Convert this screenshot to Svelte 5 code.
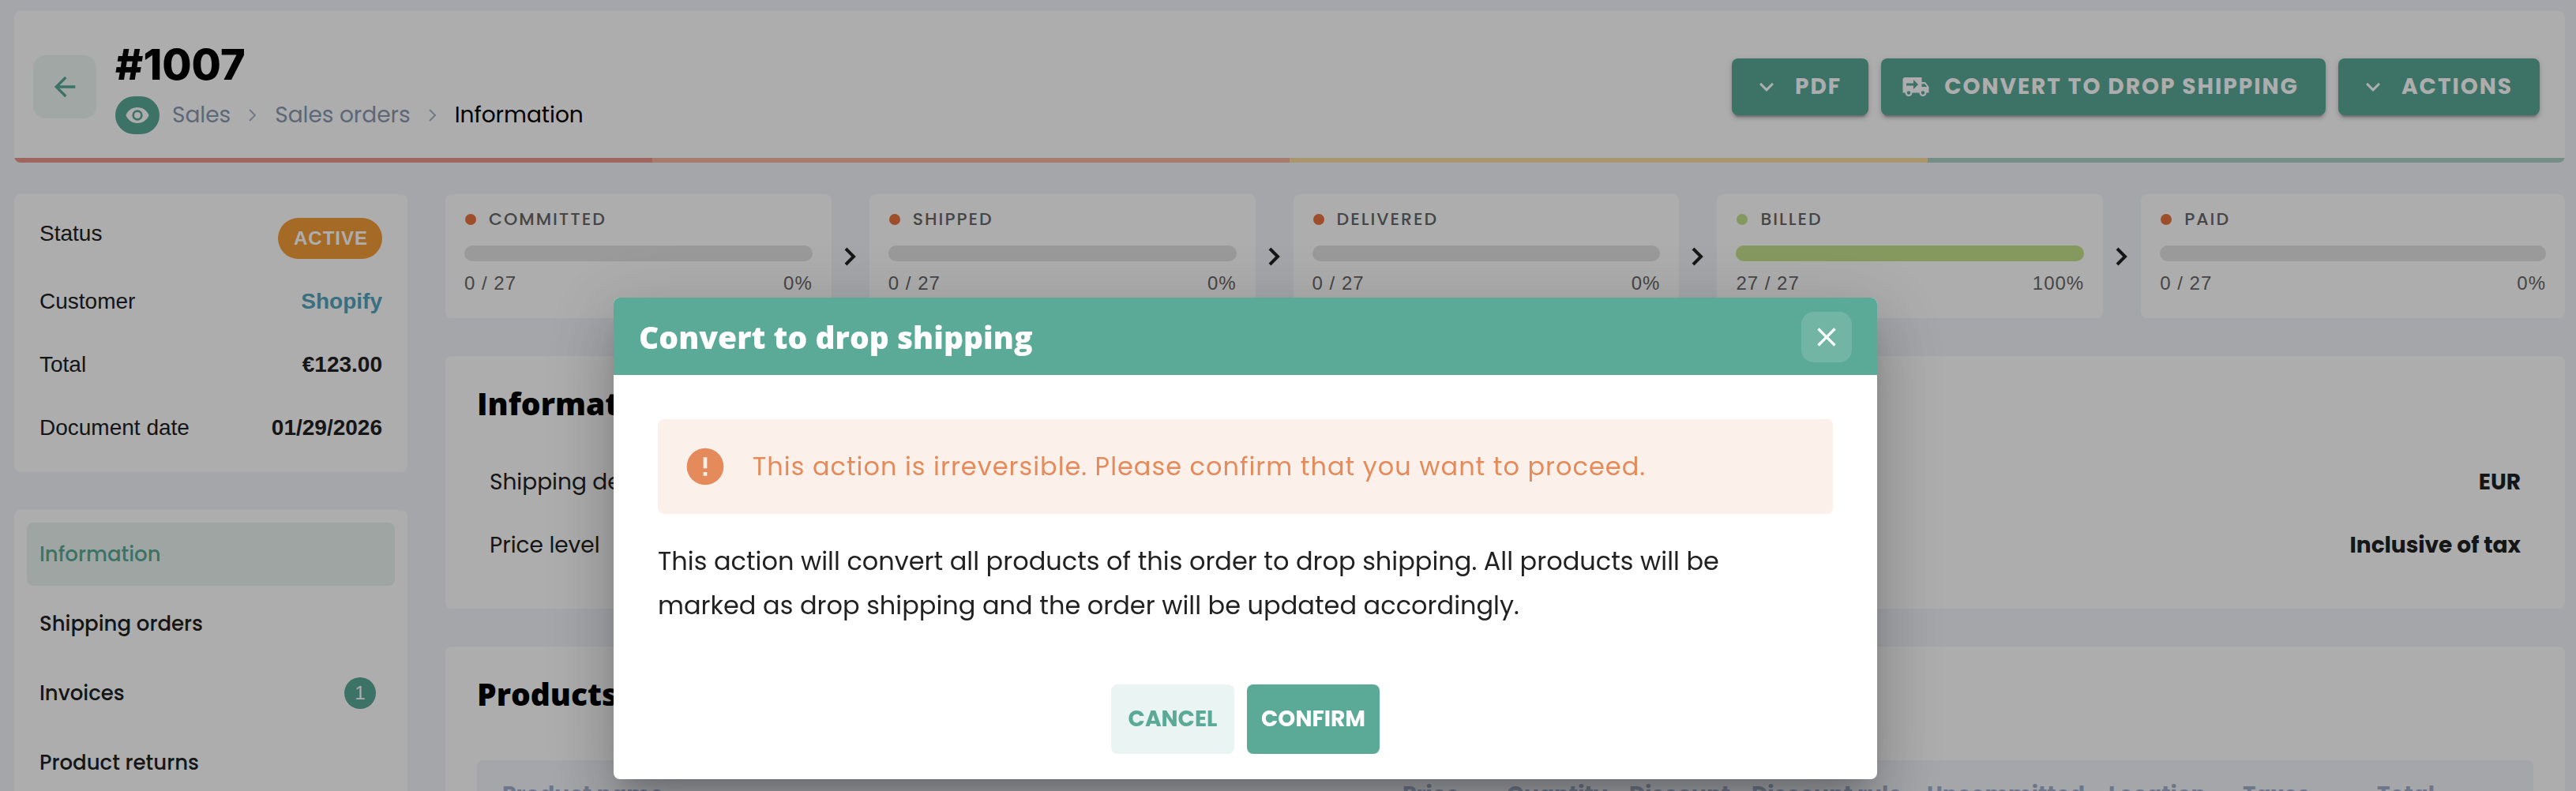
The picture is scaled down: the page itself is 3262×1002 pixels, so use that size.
<script lang="ts">
	type Step = { label: string; done: number; total: number };

	const steps: Step[] = [
		{ label: 'Committed', done: 0, total: 27 },
		{ label: 'Shipped', done: 0, total: 27 },
		{ label: 'Delivered', done: 0, total: 27 },
		{ label: 'Billed', done: 27, total: 27 },
		{ label: 'Paid', done: 0, total: 27 }
	];

	const menu = [
		{ label: 'Information', count: 0 },
		{ label: 'Shipping orders', count: 0 },
		{ label: 'Invoices', count: 1 },
		{ label: 'Product returns', count: 0 }
	];

	const columns = [
		{ name: 'name', label: 'Product name' },
		{ name: 'price', label: 'Price' },
		{ name: 'quantity', label: 'Quantity' },
		{ name: 'discount', label: 'Discount' },
		{ name: 'rule', label: 'Discount rule' },
		{ name: 'uncommitted', label: 'Uncommitted' },
		{ name: 'location', label: 'Location' },
		{ name: 'taxes', label: 'Taxes' },
		{ name: 'total', label: 'Total' }
	];

	let selected = $state('Information');
	let open = $state(true);

	function percent(step: Step) {
		return Math.round((step.done / step.total) * 100);
	}

	function close() {
		open = false;
	}
</script>

{#snippet icon(path: string, size: number)}
	<svg viewBox="0 0 24 24" width={size} height={size} fill="currentColor" aria-hidden="true">
		<path d={path} />
	</svg>
{/snippet}

{#snippet chevronDown()}
	{@render icon('M7.41,8.58L12,13.17L16.59,8.58L18,10L12,16L6,10L7.41,8.58Z', 36)}
{/snippet}

<div class="page">
	<header class="header card">
		<div class="header-main">
			<button class="back" aria-label="Back">
				{@render icon(
					'M20,11V13H8L13.5,18.5L12.08,19.92L4.16,12L12.08,4.08L13.5,5.5L8,11H20Z',
					40
				)}
			</button>
			<div class="heading">
				<h1>#1007</h1>
				<nav class="breadcrumb" aria-label="Breadcrumb">
					<button class="eye" aria-label="Watch">
						{@render icon(
							'M12,9A3,3 0 0,0 9,12A3,3 0 0,0 12,15A3,3 0 0,0 15,12A3,3 0 0,0 12,9M12,17A5,5 0 0,1 7,12A5,5 0 0,1 12,7A5,5 0 0,1 17,12A5,5 0 0,1 12,17M12,4.5C7,4.5 2.73,7.61 1,12C2.73,16.39 7,19.5 12,19.5C17,19.5 21.27,16.39 23,12C21.27,7.61 17,4.5 12,4.5Z',
							32
						)}
					</button>
					<a href="#sales">Sales</a>
					<svg class="separator" viewBox="0 0 12 18" width="12" height="18" aria-hidden="true">
						<path d="M2 2l7 7-7 7" />
					</svg>
					<a href="#sales-orders">Sales orders</a>
					<svg class="separator" viewBox="0 0 12 18" width="12" height="18" aria-hidden="true">
						<path d="M2 2l7 7-7 7" />
					</svg>
					<span class="current">Information</span>
				</nav>
			</div>
			<div class="actions">
				<button class="action">{@render chevronDown()}PDF</button>
				<button class="action">
					{@render icon(
						'M3,4A2,2 0 0,0 1,6V17H3A3,3 0 0,0 6,20A3,3 0 0,0 9,17H15A3,3 0 0,0 18,20A3,3 0 0,0 21,17H23V12L20,8H17V4M10,6L14,10L10,14V11H4V9H10M17,9.5H19.5L21.47,12H17M6,15.5A1.5,1.5 0 0,1 7.5,17A1.5,1.5 0 0,1 6,18.5A1.5,1.5 0 0,1 4.5,17A1.5,1.5 0 0,1 6,15.5M18,15.5A1.5,1.5 0 0,1 19.5,17A1.5,1.5 0 0,1 18,18.5A1.5,1.5 0 0,1 16.5,17A1.5,1.5 0 0,1 18,15.5Z',
						36
					)}Convert to drop shipping
				</button>
				<button class="action">{@render chevronDown()}Actions</button>
			</div>
		</div>
		<div class="stripe">
			<span class="red"></span>
			<span class="coral"></span>
			<span class="yellow"></span>
			<span class="green"></span>
		</div>
	</header>

	<div class="layout">
		<aside class="sidebar">
			<dl class="card summary">
				<div class="summary-row status">
					<dt>Status</dt>
					<dd class="pill">ACTIVE</dd>
				</div>
				<div class="summary-row">
					<dt>Customer</dt>
					<dd><a href="#customer">Shopify</a></dd>
				</div>
				<div class="summary-row">
					<dt>Total</dt>
					<dd>€123.00</dd>
				</div>
				<div class="summary-row">
					<dt>Document date</dt>
					<dd>01/29/2026</dd>
				</div>
			</dl>

			<nav class="card menu" aria-label="Order">
				{#each menu as item (item.label)}
					<button
						class="menu-item"
						class:active={selected === item.label}
						onclick={() => (selected = item.label)}
					>
						{item.label}
						{#if item.count > 0}
							<span class="badge">{item.count}</span>
						{/if}
					</button>
				{/each}
			</nav>
		</aside>

		<main class="content">
			<div class="steps">
				{#each steps as step, index (step.label)}
					<div class="step">
						<div class="card step-card" class:complete={step.done === step.total}>
							<div class="step-label"><span class="dot"></span>{step.label}</div>
							<div class="bar">
								<div class="bar-fill" style="width: {percent(step)}%"></div>
							</div>
							<div class="step-values">
								<span>{step.done} / {step.total}</span>
								<span>{percent(step)}%</span>
							</div>
						</div>
						{#if index < steps.length - 1}
							<div class="step-arrow">
								<svg viewBox="0 0 18 26" width="18" height="26" aria-hidden="true">
									<path d="M3 3l10 10L3 23" />
								</svg>
							</div>
						{/if}
					</div>
				{/each}
			</div>

			<section class="card section">
				<h2>Information</h2>
				<dl class="details">
					<div class="detail">
						<dt>Shipping details</dt>
						<dd>EUR</dd>
					</div>
					<div class="detail">
						<dt>Price level</dt>
						<dd>Inclusive of tax</dd>
					</div>
				</dl>
			</section>

			<section class="card section">
				<h2>Products</h2>
				<table>
					<thead>
						<tr>
							{#each columns as column (column.name)}
								<th class="col-{column.name}" scope="col">{column.label}</th>
							{/each}
						</tr>
					</thead>
				</table>
			</section>
		</main>
	</div>
</div>

{#if open}
	<div class="overlay">
		<div class="modal" role="dialog" aria-modal="true" aria-labelledby="modal-title">
			<div class="modal-header">
				<h2 id="modal-title">Convert to drop shipping</h2>
				<button class="close" aria-label="Close" onclick={close}>
					{@render icon(
						'M19,6.41L17.59,5L12,10.59L6.41,5L5,6.41L10.59,12L5,17.59L6.41,19L12,13.41L17.59,19L19,17.59L13.41,12L19,6.41Z',
						40
					)}
				</button>
			</div>
			<div class="modal-body">
				<div class="alert" role="alert">
					{@render icon(
						'M13,13H11V7H13M13,17H11V15H13M12,2A10,10 0 0,0 2,12A10,10 0 0,0 12,22A10,10 0 0,0 22,12A10,10 0 0,0 12,2Z',
						56
					)}
					<span>This action is irreversible. Please confirm that you want to proceed.</span>
				</div>
				<p>
					This action will convert all products of this order to drop shipping. All products will be
					marked as drop shipping and the order will be updated accordingly.
				</p>
			</div>
			<div class="modal-footer">
				<button class="btn btn-light" onclick={close}>CANCEL</button>
				<button class="btn btn-primary" onclick={close}>CONFIRM</button>
			</div>
		</div>
	</div>
{/if}

<style>
	:global(body) {
		background: #f3f5fb;
	}

	* {
		box-sizing: border-box;
	}

	h1,
	h2,
	p,
	dl,
	dd {
		margin: 0;
	}

	button {
		border: none;
		font-family: inherit;
		cursor: pointer;
	}

	svg {
		display: block;
		flex-shrink: 0;
	}

	.page {
		height: 100vh;
		overflow: hidden;
		padding: 14px 14px 0 18px;
		background: #f3f5fb;
		color: #212121;
		font-family: Poppins, Inter, sans-serif;
		font-size: 28px;
	}

	.card {
		background: #fff;
		border-radius: 8px;
	}

	.header {
		overflow: hidden;
	}

	.header-main {
		display: flex;
		align-items: center;
		gap: 24px;
		padding: 36px 32px 30px 24px;
	}

	.back {
		display: flex;
		align-items: center;
		justify-content: center;
		width: 80px;
		height: 80px;
		border-radius: 16px;
		background: #eef6f3;
		color: #5ba997;
	}

	.heading {
		flex: 1;
	}

	h1 {
		color: #000;
		font-family: Inter, sans-serif;
		font-size: 54px;
		font-weight: 800;
		line-height: 64px;
	}

	.breadcrumb {
		display: flex;
		align-items: center;
		gap: 22px;
		margin-top: 8px;
		height: 48px;
	}

	.breadcrumb a {
		color: #8a99b0;
		text-decoration: none;
	}

	.breadcrumb .current {
		color: #000;
	}

	.eye {
		display: flex;
		align-items: center;
		justify-content: center;
		width: 56px;
		height: 48px;
		margin-right: -6px;
		padding: 0;
		border-radius: 24px;
		background: #5ba997;
		color: #fff;
	}

	.separator {
		fill: none;
		stroke: #a9b4c8;
		stroke-width: 2;
	}

	.actions {
		display: flex;
		gap: 16px;
	}

	.action {
		display: flex;
		align-items: center;
		gap: 18px;
		height: 72px;
		padding: 0 34px 0 26px;
		border-radius: 8px;
		background: #5ba997;
		box-shadow:
			0 6px 2px -4px rgba(0, 0, 0, 0.2),
			0 4px 4px rgba(0, 0, 0, 0.14),
			0 2px 10px rgba(0, 0, 0, 0.12);
		color: #fff;
		font-size: 28px;
		font-weight: 700;
		letter-spacing: 2px;
		text-transform: uppercase;
	}

	.stripe {
		display: flex;
		height: 6px;
	}

	.stripe span {
		flex: 1;
	}

	.red {
		background: #eb968c;
	}

	.coral {
		background: #f5b5a0;
	}

	.yellow {
		background: #f9dd9f;
	}

	.green {
		background: #abd2c5;
	}

	.layout {
		display: flex;
		align-items: flex-start;
		gap: 48px;
		margin-top: 40px;
	}

	.sidebar {
		display: flex;
		flex-direction: column;
		gap: 48px;
		width: 498px;
		flex-shrink: 0;
	}

	.summary {
		padding: 16px 32px;
		font-family: 'Liberation Sans', Arial, sans-serif;
	}

	.summary-row {
		display: flex;
		align-items: center;
		justify-content: space-between;
		height: 80px;
		line-height: 40px;
	}

	.summary-row.status {
		align-items: flex-start;
		padding: 14px 0;
	}

	.summary-row dd {
		font-weight: bold;
	}

	.summary-row a {
		color: #55a5bc;
		text-decoration: none;
	}

	.pill {
		padding: 0 18px 0 20px;
		border-radius: 26px;
		background: #f39d39;
		color: #fff;
		font-size: 24px;
		letter-spacing: 1px;
		line-height: 52px;
	}

	.menu {
		display: flex;
		flex-direction: column;
		gap: 8px;
		padding: 16px;
	}

	.menu-item {
		display: flex;
		align-items: center;
		justify-content: space-between;
		height: 80px;
		padding: 0 24px 0 16px;
		border-radius: 8px;
		background: none;
		color: #212121;
		font-size: 26px;
		font-weight: 500;
	}

	.menu-item.active {
		background: #ebf4f0;
		color: #5ba997;
	}

	.badge {
		width: 40px;
		border-radius: 50%;
		background: #5ba997;
		color: #fff;
		font-family: 'Liberation Sans', Arial, sans-serif;
		font-size: 24px;
		font-weight: 400;
		line-height: 40px;
		text-align: center;
	}

	.content {
		display: flex;
		flex: 1;
		flex-direction: column;
		gap: 48px;
		min-width: 0;
	}

	.steps {
		display: grid;
		grid-template-columns: repeat(5, 1fr);
	}

	.step {
		display: flex;
	}

	.step-card {
		flex: 1;
		padding: 16px 24px 24px;
		color: #676767;
	}

	.step-label {
		display: flex;
		align-items: center;
		gap: 16px;
		padding-left: 1px;
		font-size: 22px;
		font-weight: 500;
		letter-spacing: 2px;
		line-height: 32px;
		text-transform: uppercase;
	}

	.dot {
		width: 14px;
		height: 14px;
		border-radius: 50%;
		background: #eb7341;
	}

	.complete .dot {
		background: #c5e28d;
	}

	.bar {
		height: 20px;
		margin: 17px 0 8px;
		overflow: hidden;
		border-radius: 10px;
		background: #e3e3e3;
	}

	.bar-fill {
		height: 100%;
		background: #c5e28d;
	}

	.step-values {
		display: flex;
		justify-content: space-between;
		font-family: 'Liberation Sans', Arial, sans-serif;
		font-size: 24px;
		letter-spacing: 1px;
		line-height: 40px;
	}

	.step-arrow {
		display: flex;
		align-items: center;
		justify-content: center;
		width: 48px;
	}

	.step-arrow path {
		fill: none;
		stroke: #212121;
		stroke-width: 4;
	}

	.section {
		padding: 40px;
	}

	h2 {
		font-family: 'Open Sans', sans-serif;
		font-size: 39px;
		font-weight: 800;
		line-height: 40px;
	}

	.section h2 {
		color: #000;
	}

	.details {
		margin-top: 40px;
	}

	.detail {
		display: flex;
		align-items: center;
		justify-content: space-between;
		height: 80px;
		padding: 0 16px;
	}

	.detail dd {
		font-weight: 700;
	}

	table {
		width: 100%;
		margin-top: 64px;
		border-collapse: collapse;
		table-layout: fixed;
	}

	th {
		height: 88px;
		padding: 0 0 0 32px;
		background: #f3f5fb;
		color: #a3b0cb;
		font-weight: 700;
		text-align: left;
		white-space: nowrap;
	}

	th:first-child {
		border-radius: 8px 0 0 0;
	}

	th:last-child {
		border-radius: 0 8px 0 0;
	}

	.col-price {
		width: 132px;
	}

	.col-quantity,
	.col-discount {
		width: 155px;
	}

	.col-rule {
		width: 222px;
	}

	.col-uncommitted,
	.col-total {
		width: 230px;
	}

	.col-location,
	.col-taxes {
		width: 170px;
	}

	.overlay {
		position: fixed;
		inset: 0;
		display: flex;
		align-items: flex-start;
		justify-content: center;
		padding: 377px 108px 0 0;
		background: rgba(0, 0, 0, 0.32);
		color: #212121;
		font-family: Poppins, Inter, sans-serif;
		font-size: 32px;
	}

	.modal {
		width: 100%;
		max-width: 1600px;
		overflow: hidden;
		border-radius: 8px;
		background: #fff;
		box-shadow:
			0 22px 30px -14px rgba(0, 0, 0, 0.2),
			0 48px 76px 6px rgba(0, 0, 0, 0.14),
			0 18px 92px 16px rgba(0, 0, 0, 0.12);
	}

	.modal-header {
		display: flex;
		align-items: center;
		justify-content: space-between;
		padding: 18px 32px 16px;
		background: #5ba997;
		color: #fff;
	}

	.close {
		display: flex;
		align-items: center;
		justify-content: center;
		width: 64px;
		height: 64px;
		padding: 0;
		border-radius: 16px;
		background: rgba(255, 255, 255, 0.14);
		color: #fff;
	}

	.modal-body {
		padding: 56px 56px 0;
		line-height: 56px;
	}

	.alert {
		display: flex;
		align-items: center;
		gap: 32px;
		padding: 32px;
		border-radius: 8px;
		background: #fbf0ea;
		color: #e58b5b;
		letter-spacing: 1px;
	}

	.modal-body p {
		margin-top: 32px;
		padding-right: 32px;
	}

	.modal-footer {
		display: flex;
		justify-content: center;
		gap: 16px;
		padding: 72px 32px 32px;
	}

	.btn {
		min-width: 156px;
		height: 88px;
		padding: 0 18px;
		border-radius: 8px;
		font-size: 28px;
		font-weight: 700;
	}

	.btn-light {
		background: #eaf4f2;
		color: #5ba997;
	}

	.btn-primary {
		background: #5ba997;
		color: #fff;
	}
</style>
